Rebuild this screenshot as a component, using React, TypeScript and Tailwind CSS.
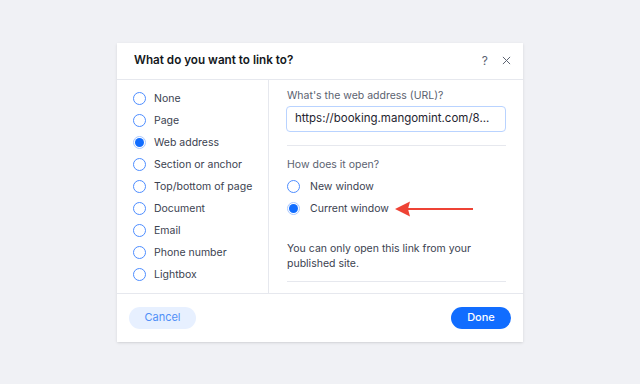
import { useState } from "react";

const options = [
  "None",
  "Page",
  "Web address",
  "Section or anchor",
  "Top/bottom of page",
  "Document",
  "Email",
  "Phone number",
  "Lightbox",
];

function Radio({ checked }: { checked: boolean }) {
  return (
    <span
      className={`flex h-[13px] w-[13px] shrink-0 items-center justify-center rounded-full border-[1.5px] bg-white ${
        checked ? "border-[#a9c8ff]" : "border-[#4d8dff]"
      }`}
    >
      {checked && <span className="h-[9px] w-[9px] rounded-full bg-[#116dff]" />}
    </span>
  );
}

export default function App() {
  const [linkType, setLinkType] = useState("Web address");
  const [target, setTarget] = useState("current");

  return (
    <main
      className="flex h-[384px] w-[640px] items-center justify-center bg-[#f0f1f5] text-[#162d3d]"
      style={{ fontFamily: "Inter, 'Open Sans', sans-serif" }}
    >
      <div className="flex h-[299px] w-[406px] flex-col bg-white shadow-sm">
        {/* Header */}
        <div className="flex h-[37px] shrink-0 items-center justify-between border-b border-[#e6e8ee] pl-[17px] pr-[12px]">
          <h2 className="text-[11.7px] font-semibold text-[#131720]">What do you want to link to?</h2>
          <div className="flex items-center gap-[14px] text-[#5b6270]">
            <span className="text-[12px]">?</span>
            <svg viewBox="0 0 10 10" className="h-[9px] w-[9px]" stroke="currentColor" strokeWidth="1.1" fill="none">
              <path d="M1 1l8 8M9 1l-8 8" />
            </svg>
          </div>
        </div>

        {/* Body */}
        <div className="flex h-[214px] shrink-0 border-b border-[#e6e8ee]">
          <div className="w-[152px] shrink-0 border-r border-[#e6e8ee] pl-[16px] pt-[8px]">
            {options.map((o) => (
              <button
                key={o}
                type="button"
                onClick={() => setLinkType(o)}
                className="flex h-[22px] w-full items-center gap-[8px] text-left text-[10.5px] text-[#3b4250]"
              >
                <Radio checked={linkType === o} />
                <span>{o}</span>
              </button>
            ))}
          </div>

          <div className="flex-1 overflow-hidden pl-[18px] pr-[17px] pt-[8px]">
            <label className="block text-[10.5px] leading-[16px] text-[#5b6270]">What's the web address (URL)?</label>
            <div className="mt-[2px] -ml-[1px] flex h-[26px] w-[220px] items-center overflow-hidden whitespace-nowrap rounded-[4px] border border-[#b9d3ff] px-[8px] text-[11.5px] text-[#1f2530]">
              https://booking.mangomint.com/8...
            </div>
            <div className="mt-[13px] h-px w-[219px] bg-[#e6e8ee]" />

            <p className="mt-[11px] text-[10.5px] leading-[16px] text-[#5b6270]">How does it open?</p>
            <div className="mt-[3px]">
              <button
                type="button"
                onClick={() => setTarget("new")}
                className="flex h-[22px] items-center gap-[10px] text-[10.5px] text-[#3b4250]"
              >
                <Radio checked={target === "new"} />
                <span>New window</span>
              </button>
              <div className="flex h-[22px] items-center">
                <button
                  type="button"
                  onClick={() => setTarget("current")}
                  className="flex items-center gap-[10px] text-[10.5px] text-[#3b4250]"
                >
                  <Radio checked={target === "current"} />
                  <span>Current window</span>
                </button>
                <svg viewBox="0 0 80 16" className="ml-[6px] h-[16px] w-[80px]">
                  <path d="M0 8L15 0.5L13 8L15 15.5Z" fill="#ee4335" />
                  <path d="M12 8H78" stroke="#ee4335" strokeWidth="2" />
                </svg>
              </div>
            </div>

            <p className="mt-[21px] w-[200px] text-[10.5px] leading-[15px] text-[#3b4250]">
              You can only open this link from your published site.
            </p>
            <div className="mt-[10px] h-px w-[219px] bg-[#e6e8ee]" />
            <p className="mt-[9px] text-[10.5px] text-[#e8eaee]">Anchor name for this link</p>
          </div>
        </div>

        {/* Footer */}
        <div className="flex flex-1 items-center justify-between pl-[12px] pr-[12px]">
          <button
            type="button"
            className="flex h-[22px] w-[67px] items-center justify-center rounded-full bg-[#e7f0ff] text-[11px] text-[#4f8ff7]"
          >
            Cancel
          </button>
          <button
            type="button"
            className="flex h-[22px] w-[60px] items-center justify-center rounded-full bg-[#116dff] text-[11px] font-medium text-white"
          >
            Done
          </button>
        </div>
      </div>
    </main>
  );
}
